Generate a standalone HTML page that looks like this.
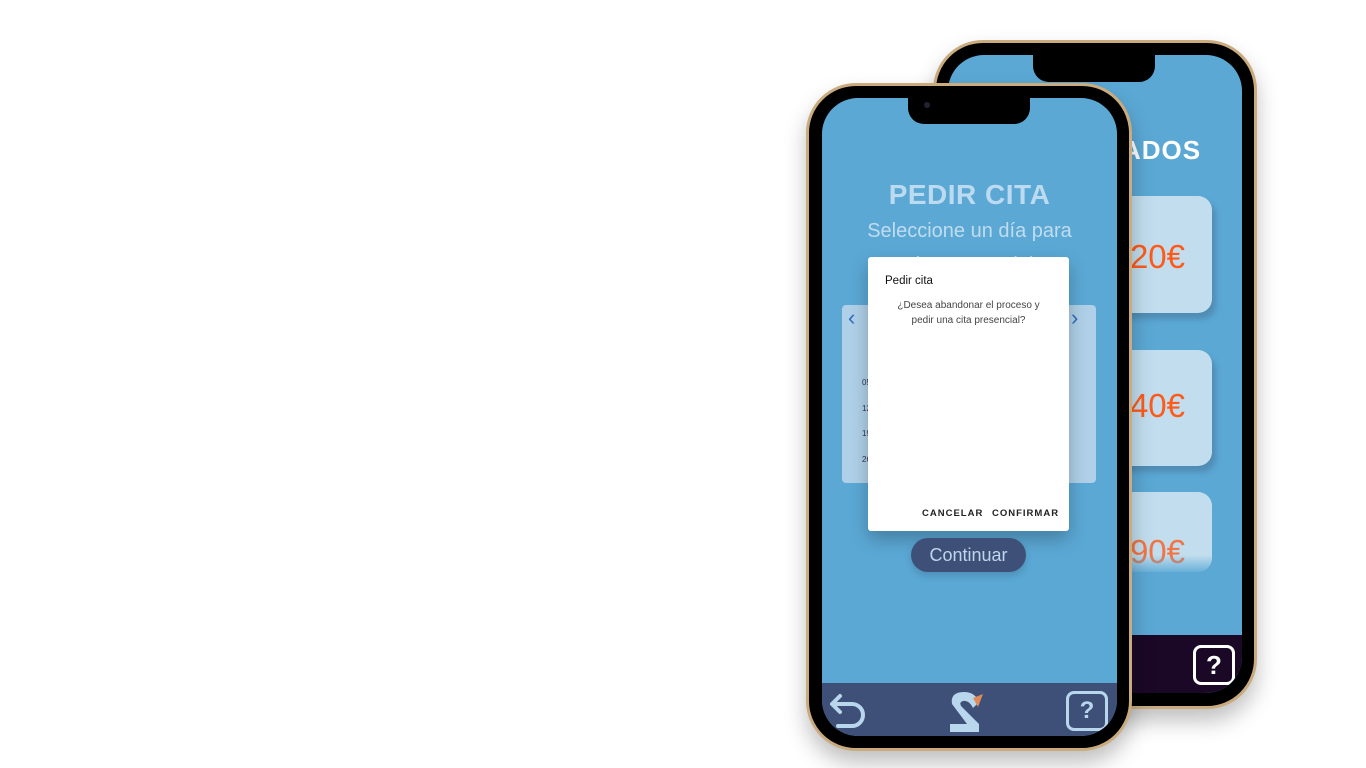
<!DOCTYPE html>
<html><head><meta charset="utf-8"><style>
*{margin:0;padding:0;box-sizing:border-box}
body{width:1366px;height:768px;background:#fff;position:relative;overflow:hidden;font-family:"Liberation Sans",sans-serif}
.abs{position:absolute}
.frame{position:absolute;border:3px solid #c9ab7e;background:#000;box-shadow:0 12px 22px rgba(0,0,0,.25)}
.screen{position:absolute;overflow:hidden;background:#5ba8d5}
.notch{position:absolute;background:#000;border-radius:0 0 16px 16px}
.card{position:absolute;background:#c2deee;border-radius:14px;box-shadow:4px 6px 6px rgba(60,90,120,.35);overflow:hidden}
.price{position:absolute;color:#ff5a1a;font-size:33px;right:27px}
</style></head><body>

<!-- back phone -->
<div class="frame" style="left:933px;top:40px;width:324px;height:669px;border-radius:50px"></div>
<div class="screen" style="left:948px;top:55px;width:294px;height:638px;border-radius:36px">
  <div class="notch" style="left:85px;top:0;width:122px;height:27px"></div>
  <div class="abs" style="left:174px;top:80px;color:#fff;font-weight:bold;font-size:26px;letter-spacing:1px">ADOS</div>
  <div class="card" style="left:130px;top:141px;width:134px;height:117px"><div class="price" style="top:42px">20€</div></div>
  <div class="card" style="left:130px;top:295px;width:134px;height:116px"><div class="price" style="top:37px">40€</div></div>
  <div class="card" style="left:130px;top:437px;width:134px;height:80px;box-shadow:none"><div class="price" style="top:41px;opacity:.8">90€</div></div>
  <div class="abs" style="left:130px;top:500px;width:140px;height:20px;background:linear-gradient(#5ba8d500,#5ba8d5)"></div>
  <div class="abs" style="left:0;top:580px;width:294px;height:58px;background:#1a0826"></div>
  <div class="abs" style="left:245px;top:590px;width:42px;height:40px;border:3px solid #fff;border-radius:8px;color:#fff;font-weight:bold;font-size:26px;text-align:center;line-height:34px">?</div>
</div>

<!-- front phone -->
<div class="frame" style="left:806px;top:83px;width:326px;height:668px;border-radius:50px"></div>
<div class="screen" style="left:822px;top:98px;width:295px;height:638px;border-radius:36px">
  <div class="notch" style="left:86px;top:0;width:122px;height:26px"></div>
  <div class="abs" style="left:102px;top:4px;width:6px;height:6px;border-radius:50%;background:#223"></div>
  <div class="abs" style="left:0;top:81px;width:295px;text-align:center;color:#bcdaf0;font-weight:bold;font-size:28px;letter-spacing:.5px">PEDIR CITA</div>
  <div class="abs" style="left:0;top:122px;width:295px;text-align:center;color:#c0dcf0;font-size:20px">Seleccione un día para</div>
  <div class="abs" style="left:0;top:156px;width:295px;text-align:center;color:#c0dcf0;font-size:20px">cita presencial</div>
  <div class="abs" style="left:20px;top:207px;width:254px;height:178px;background:#afd0e8;border-radius:4px"></div>
  <div class="abs" style="left:26px;top:207px;color:#2b6fc0;font-size:22px">‹</div>
  <div class="abs" style="left:249px;top:207px;color:#2b6fc0;font-size:22px">›</div>
  <div class="abs" style="left:40px;top:272px;color:#335;font-size:8px;line-height:25.5px">05<br>12<br>19<br>26</div>
  <div class="abs" style="left:46px;top:159px;width:201px;height:274px;background:#fff;border-radius:3px;box-shadow:0 8px 18px rgba(0,0,0,.25)">
    <div class="abs" style="left:17px;top:18px;font-size:11.5px;color:#111">Pedir cita</div>
    <div class="abs" style="left:0;top:42px;width:201px;text-align:center;font-size:10px;line-height:14.5px;color:#444">¿Desea abandonar el proceso y<br>pedir una cita presencial?</div>
    <div class="abs" style="left:54px;top:251px;font-size:9.5px;font-weight:bold;letter-spacing:1px;color:#222">CANCELAR</div>
    <div class="abs" style="left:124px;top:251px;font-size:9.5px;font-weight:bold;letter-spacing:1px;color:#222">CONFIRMAR</div>
  </div>
  <div class="abs" style="left:89px;top:440px;width:115px;height:34px;background:#3f5078;border-radius:17px;color:#bcd6ec;font-size:18px;text-align:center;line-height:34px;box-shadow:0 4px 8px rgba(0,0,0,.15)">Continuar</div>
  <div class="abs" style="left:0;top:585px;width:295px;height:53px;background:#3f5078"></div>
  <svg class="abs" style="left:6px;top:592px" width="40" height="44" viewBox="0 0 40 44"><path d="M12 6 L4 14 L12 22 M4 14 H24 a11 11 0 0 1 0 22 H10" fill="none" stroke="#b8d6ec" stroke-width="4" stroke-linecap="round" stroke-linejoin="round"/></svg>
  <svg class="abs" style="left:125px;top:592px" width="40" height="42" viewBox="0 0 40 42"><path d="M3 34 H20 L5 14 Q3 2 17 2 Q28 2 32 12 L26 18 Q22 10 16 11 Q12 12 14 16 L32 34 V42 H3 Z" fill="#b8d6ec"/><path d="M26 8 L36 4 L31 17 Z" fill="#e08a5a"/></svg>
  <div class="abs" style="left:244px;top:593px;width:42px;height:40px;border:3px solid #b8d6ec;border-radius:8px;color:#b8d6ec;font-weight:bold;font-size:24px;text-align:center;line-height:34px">?</div>
</div>
</body></html>
